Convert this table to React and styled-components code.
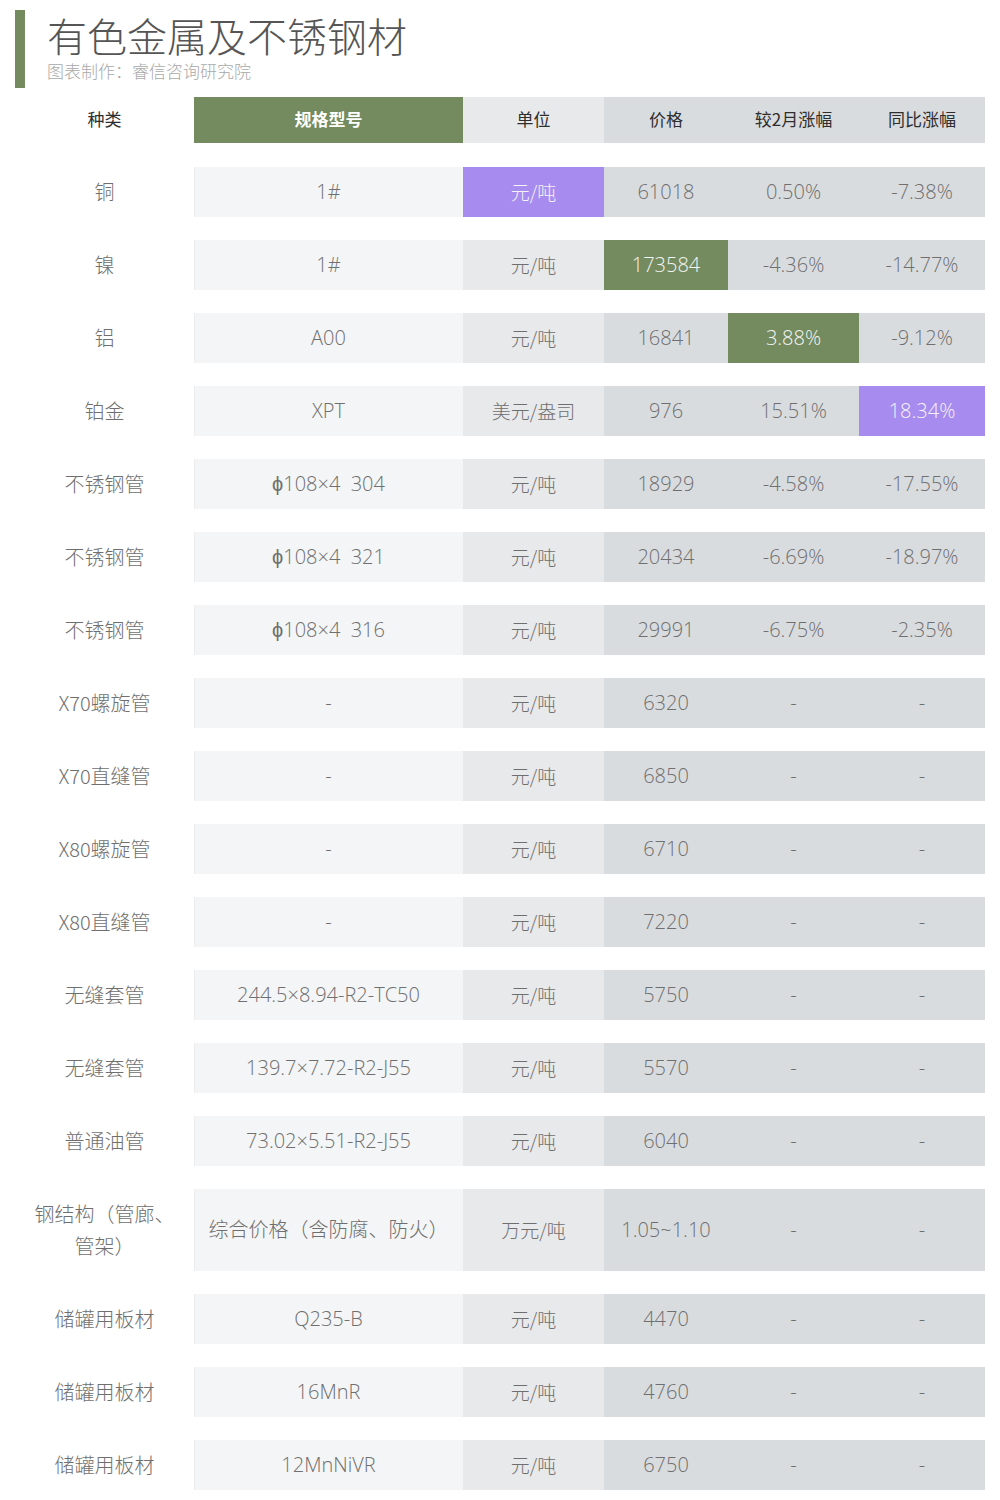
import React from "react";
import styled, { createGlobalStyle } from "styled-components";

const GlobalStyle = createGlobalStyle`
  body {
    margin: 0;
    background: #ffffff;
    font-family: "Open Sans", "Noto Sans CJK SC", sans-serif;
  }
`;

const GREEN = "#738b5e";
const PURPLE = "#a88bef";

const Page = styled.div`
  width: 1000px;
  padding: 10px 15px 0 15px;
  box-sizing: border-box;
`;

const TitleBlock = styled.div`
  display: flex;
  align-items: stretch;
  height: 78px;
`;

const Bar = styled.div`
  width: 10px;
  background: ${GREEN};
  margin-right: 22px;
`;

const TitleText = styled.div`
  display: flex;
  flex-direction: column;
  padding-top: 3px;
`;

const Title = styled.h1`
  margin: 0;
  font-weight: 300;
  font-size: 40px;
  line-height: 44px;
  color: #555;
  font-family: "Noto Sans CJK SC", sans-serif;
`;

const Subtitle = styled.div`
  margin-top: 4px;
  font-size: 17px;
  line-height: 20px;
  color: #a9a9a9;
  font-family: "Noto Sans CJK SC", sans-serif;
  font-weight: 300;
`;

const Table = styled.div`
  margin-top: 9px;
  display: grid;
  grid-template-columns: 179px 269px 141px 124px 131px 126px;
  row-gap: 23px;
`;

const colBg = ["transparent", "#f4f5f6", "#e8e9eb", "#d9dcdf", "#d9dcdf", "#d9dcdf"];

const HeadCell = styled.div`
  height: 46px;
  display: flex;
  align-items: center;
  justify-content: center;
  font-family: "Noto Sans CJK SC", sans-serif;
  font-size: 17px;
  line-height: 22px;
  padding-bottom: 3px;
  box-sizing: border-box;
  font-weight: ${(p) => (p.$accent ? 700 : 400)};
  color: ${(p) => (p.$accent ? "#ffffff" : "#2e2e2e")};
  background: ${(p) => (p.$accent ? GREEN : colBg[p.$col])};
  margin-bottom: 1px;
`;

const Cell = styled.div`
  height: ${(p) => (p.$tall ? 82 : 50)}px;
  display: flex;
  align-items: center;
  justify-content: center;
  text-align: center;
  white-space: pre;
  font-family: "Open Sans", "Noto Sans CJK SC", sans-serif;
  font-weight: 300;
  font-size: 20px;
  line-height: 32px;
  color: ${(p) => (p.$hl ? "#f4f4f4" : "#6f6f6f")};
  background: ${(p) =>
    p.$hl === "purple" ? PURPLE : p.$hl === "green" ? GREEN : colBg[p.$col]};
  box-shadow: ${(p) => (p.$col === 1 ? "inset 1px 0 0 #ececec" : "none")};
`;

const Label = styled.span`
  white-space: pre-line;
  font-family: "Noto Sans CJK SC", sans-serif;
  font-size: 20px;
`;

const Unit = styled.span`
  font-family: "Noto Sans CJK SC", sans-serif;
  font-size: 19px;
`;

const headers = ["种类", "规格型号", "单位", "价格", "较2月涨幅", "同比涨幅"];

const rows = [
  { c: ["铜", "1#", "元/吨", "61018", "0.50%", "-7.38%"], hl: { 2: "purple" } },
  { c: ["镍", "1#", "元/吨", "173584", "-4.36%", "-14.77%"], hl: { 3: "green" } },
  { c: ["铝", "A00", "元/吨", "16841", "3.88%", "-9.12%"], hl: { 4: "green" } },
  { c: ["铂金", "XPT", "美元/盎司", "976", "15.51%", "18.34%"], hl: { 5: "purple" } },
  { c: ["不锈钢管", "ϕ108×4  304", "元/吨", "18929", "-4.58%", "-17.55%"] },
  { c: ["不锈钢管", "ϕ108×4  321", "元/吨", "20434", "-6.69%", "-18.97%"] },
  { c: ["不锈钢管", "ϕ108×4  316", "元/吨", "29991", "-6.75%", "-2.35%"] },
  { c: ["X70螺旋管", "-", "元/吨", "6320", "-", "-"] },
  { c: ["X70直缝管", "-", "元/吨", "6850", "-", "-"] },
  { c: ["X80螺旋管", "-", "元/吨", "6710", "-", "-"] },
  { c: ["X80直缝管", "-", "元/吨", "7220", "-", "-"] },
  { c: ["无缝套管", "244.5×8.94-R2-TC50", "元/吨", "5750", "-", "-"] },
  { c: ["无缝套管", "139.7×7.72-R2-J55", "元/吨", "5570", "-", "-"] },
  { c: ["普通油管", "73.02×5.51-R2-J55", "元/吨", "6040", "-", "-"] },
  {
    c: ["钢结构（管廊、\n管架）", "综合价格（含防腐、防火）", "万元/吨", "1.05~1.10", "-", "-"],
    tall: true,
  },
  { c: ["储罐用板材", "Q235-B", "元/吨", "4470", "-", "-"] },
  { c: ["储罐用板材", "16MnR", "元/吨", "4760", "-", "-"] },
  { c: ["储罐用板材", "12MnNiVR", "元/吨", "6750", "-", "-"] },
];

const renderValue = (v, ci) => {
  if (ci === 0) return <Label>{v}</Label>;
  if (ci === 2) return <Unit>{v}</Unit>;
  return v;
};

const App = () => (
  <Page>
    <GlobalStyle />
    <TitleBlock>
      <Bar />
      <TitleText>
        <Title>有色金属及不锈钢材</Title>
        <Subtitle>图表制作：睿信咨询研究院</Subtitle>
      </TitleText>
    </TitleBlock>
    <Table>
      {headers.map((h, i) => (
        <HeadCell key={h} $col={i} $accent={i === 1}>
          {h}
        </HeadCell>
      ))}
      {rows.map((r, ri) =>
        r.c.map((v, ci) => (
          <Cell
            key={ri + "-" + ci}
            $col={ci}
            $tall={r.tall}
            $hl={r.hl ? r.hl[ci] : undefined}
          >
            {renderValue(v, ci)}
          </Cell>
        ))
      )}
    </Table>
  </Page>
);

export default App;
